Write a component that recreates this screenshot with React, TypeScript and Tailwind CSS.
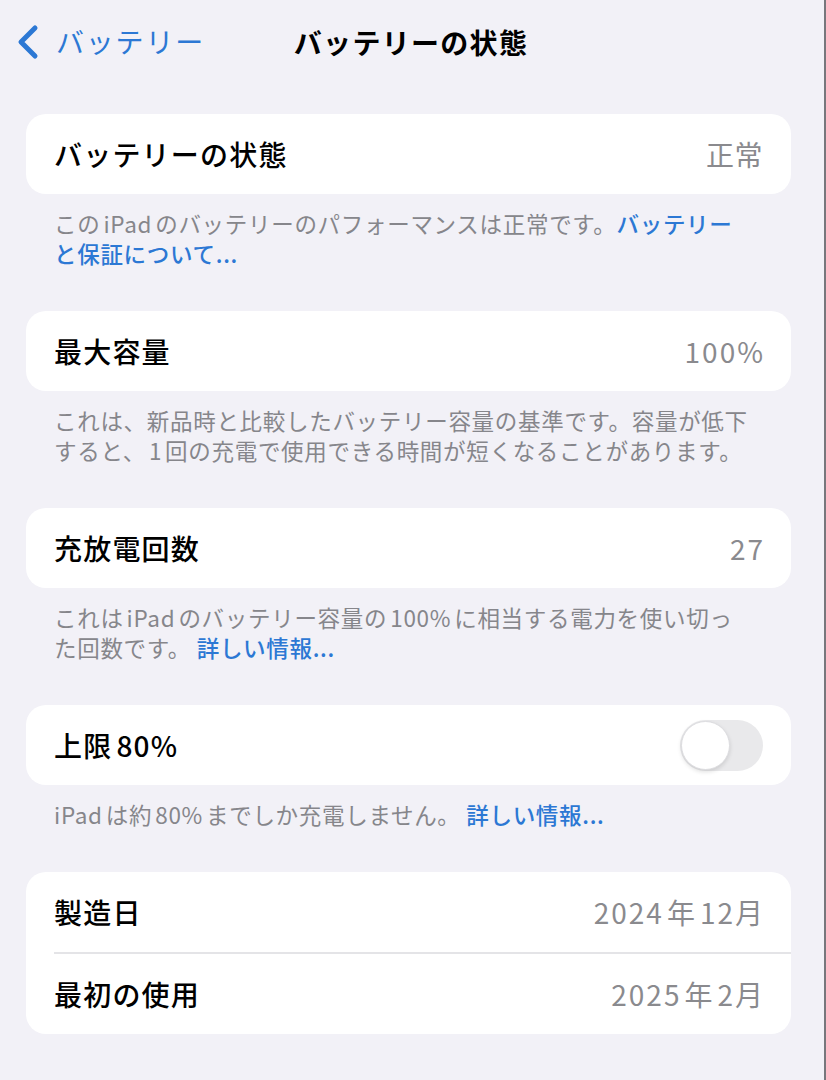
import React from "react";

const font = { fontFamily: '"Noto Sans CJK JP", "Noto Sans", sans-serif' };

function Row({ label, value, num, children }: { label: React.ReactNode; value?: React.ReactNode; num?: boolean; children?: React.ReactNode }) {
  return (
    <div className="h-[80px] flex items-center justify-between pl-[28px] pr-[28px]">
      <span className="text-[28px] font-medium text-black tracking-[1.2px]">{label}</span>
      {value !== undefined && (
        <span
          className={
            num
              ? "text-[28px] text-[#8a8a8e] tracking-[2px] mr-[-2px]"
              : "text-[28px] text-[#8a8a8e] tracking-[0.5px]"
          }
        >
          {value}
        </span>
      )}
      {children}
    </div>
  );
}

function Card({ children }: { children: React.ReactNode }) {
  return <div className="w-[765px] bg-white rounded-[20px] overflow-hidden">{children}</div>;
}

function Footer({ children }: { children: React.ReactNode }) {
  return (
    <div className="pl-[28px] pt-[14px] mb-[43px] text-[22.5px] leading-[30px] text-[#86868b] tracking-[0.7px] whitespace-nowrap">
      {children}
    </div>
  );
}

const Link = ({ children }: { children: React.ReactNode }) => (
  <span className="text-[#2c78d4] font-medium">{children}</span>
);

const L = ({ children }: { children: React.ReactNode }) => <span className="px-[3px]">{children}</span>;
const Y = () => <span className="px-[3px]">年</span>;

export default function App() {
  return (
    <div style={font} className="w-[826px] h-[1080px] bg-[#f2f1f7] flex overflow-hidden">
      <div className="flex-1 flex flex-col">
        <div className="h-[84px] relative flex items-center">
          <div className="flex items-center pl-[15px] pb-[2px]">
            <svg width="26" height="36" viewBox="0 0 26 36" className="mt-[1px]">
              <path d="M20 4 L6 18 L20 32" fill="none" stroke="#2c78d4" strokeWidth="5" strokeLinecap="round" strokeLinejoin="round" />
            </svg>
            <span className="ml-[15px] text-[28px] text-[#2c78d4] tracking-[1.8px]">バッテリー</span>
          </div>
          <div className="absolute left-0 right-0 flex justify-center pointer-events-none">
            <span className="text-[28px] font-bold text-black tracking-[1.3px] mr-[2px]">バッテリーの状態</span>
          </div>
        </div>
        <div className="pl-[26px] pt-[30px]">
          <Card>
            <Row label="バッテリーの状態" value="正常" />
          </Card>
          <Footer>
            この<L>iPad</L>のバッテリーのパフォーマンスは正常です。<Link>バッテリー</Link>
            <br />
            <Link>と保証について...</Link>
          </Footer>
          <Card>
            <Row label="最大容量" value="100%" num />
          </Card>
          <Footer>
            これは、新品時と比較したバッテリー容量の基準です。容量が低下
            <br />
            すると、<L>1</L>回の充電で使用できる時間が短くなることがあります。
          </Footer>
          <Card>
            <Row label="充放電回数" value="27" num />
          </Card>
          <Footer>
            これは<L>iPad</L>のバッテリー容量の<L>100%</L>に相当する電力を使い切っ
            <br />
            た回数です。 <Link>詳しい情報...</Link>
          </Footer>
          <Card>
            <Row label={<>上限<span className="pl-[4px]">80%</span></>}>
              <div className="w-[83px] h-[51px] rounded-full bg-[#e9e9eb] relative">
                <div className="absolute left-[1px] top-[1px] w-[49px] h-[49px] rounded-full bg-white border border-[#dcdcdf] shadow-[0_2px_4px_rgba(0,0,0,0.12)]" />
              </div>
            </Row>
          </Card>
          <Footer>
            <span className="pr-[3px]">iPad</span>は約<L>80%</L>までしか充電しません。 <Link>詳しい情報...</Link>
          </Footer>
          <Card>
            <Row label="製造日" value={<>2024<Y />12月</>} num />
            <div className="ml-[28px] h-[2px] bg-[#e4e4e7]" />
            <Row label="最初の使用" value={<>2025<Y />2月</>} num />
          </Card>
        </div>
      </div>
      <div className="w-[2px] bg-[#77777c]" />
    </div>
  );
}
